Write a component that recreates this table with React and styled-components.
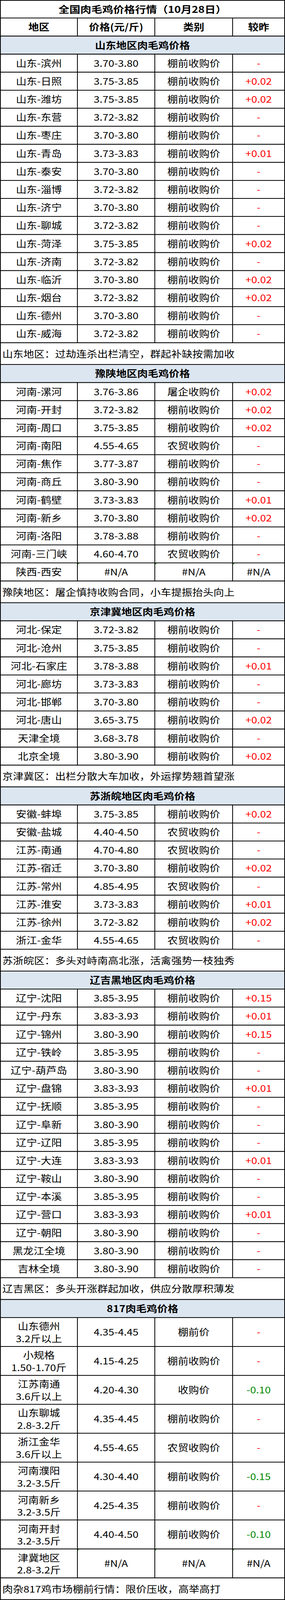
import React from 'react';
import styled, { createGlobalStyle, css } from 'styled-components';

const GlobalStyle = createGlobalStyle`
  html, body {
    margin: 0;
    padding: 0;
    background: #ffffff;
  }
  body {
    font-family: "Noto Sans CJK SC", "Noto Sans", sans-serif;
    color: #000;
  }
`;

const PAGE_H = 4701;

const sections = [
  {
    title: '山东地区肉毛鸡价格',
    rows: [
      ['山东-滨州', '3.70-3.80', '棚前收购价', '-'],
      ['山东-日照', '3.75-3.85', '棚前收购价', '+0.02'],
      ['山东-潍坊', '3.75-3.85', '棚前收购价', '+0.02'],
      ['山东-东营', '3.72-3.82', '棚前收购价', '-'],
      ['山东-枣庄', '3.70-3.80', '棚前收购价', '-'],
      ['山东-青岛', '3.73-3.83', '棚前收购价', '+0.01'],
      ['山东-泰安', '3.70-3.80', '棚前收购价', '-'],
      ['山东-淄博', '3.72-3.82', '棚前收购价', '-'],
      ['山东-济宁', '3.70-3.80', '棚前收购价', '-'],
      ['山东-聊城', '3.72-3.82', '棚前收购价', '-'],
      ['山东-菏泽', '3.75-3.85', '棚前收购价', '+0.02'],
      ['山东-济南', '3.72-3.82', '棚前收购价', '-'],
      ['山东-临沂', '3.70-3.80', '棚前收购价', '+0.02'],
      ['山东-烟台', '3.72-3.82', '棚前收购价', '+0.02'],
      ['山东-德州', '3.70-3.80', '棚前收购价', '-'],
      ['山东-威海', '3.72-3.82', '棚前收购价', '-'],
    ],
    note: '山东地区：过劫连杀出栏清空，群起补缺按需加收',
  },
  {
    title: '豫陕地区肉毛鸡价格',
    rows: [
      ['河南-漯河', '3.76-3.86', '屠企收购价', '+0.02'],
      ['河南-开封', '3.72-3.82', '棚前收购价', '+0.02'],
      ['河南-周口', '3.75-3.85', '棚前收购价', '+0.02'],
      ['河南-南阳', '4.55-4.65', '农贸收购价', '-'],
      ['河南-焦作', '3.77-3.87', '棚前收购价', '-'],
      ['河南-商丘', '3.80-3.90', '棚前收购价', '-'],
      ['河南-鹤壁', '3.73-3.83', '棚前收购价', '+0.01'],
      ['河南-新乡', '3.70-3.80', '棚前收购价', '+0.02'],
      ['河南-洛阳', '3.78-3.88', '棚前收购价', '-'],
      ['河南-三门峡', '4.60-4.70', '农贸收购价', '-'],
      ['陕西-西安', '#N/A', '#N/A', '#N/A'],
    ],
    note: '豫陕地区：屠企慎持收购合同，小车提振抬头向上',
  },
  {
    title: '京津冀地区肉毛鸡价格',
    rows: [
      ['河北-保定', '3.72-3.82', '棚前收购价', '-'],
      ['河北-沧州', '3.75-3.85', '棚前收购价', '-'],
      ['河北-石家庄', '3.78-3.88', '棚前收购价', '+0.01'],
      ['河北-廊坊', '3.73-3.83', '棚前收购价', '-'],
      ['河北-邯郸', '3.70-3.80', '棚前收购价', '-'],
      ['河北-唐山', '3.65-3.75', '棚前收购价', '+0.02'],
      ['天津全境', '3.68-3.78', '棚前收购价', '-'],
      ['北京全境', '3.80-3.90', '棚前收购价', '+0.02'],
    ],
    note: '京津冀区：出栏分散大车加收，外运撑势翘首望涨',
  },
  {
    title: '苏浙皖地区肉毛鸡价格',
    rows: [
      ['安徽-蚌埠', '3.75-3.85', '棚前收购价', '+0.02'],
      ['安徽-盐城', '4.40-4.50', '农贸收购价', '-'],
      ['江苏-南通', '4.70-4.80', '农贸收购价', '-'],
      ['江苏-宿迁', '3.70-3.80', '棚前收购价', '+0.02'],
      ['江苏-常州', '4.85-4.95', '农贸收购价', '-'],
      ['江苏-淮安', '3.73-3.83', '棚前收购价', '+0.01'],
      ['江苏-徐州', '3.72-3.82', '棚前收购价', '+0.02'],
      ['浙江-金华', '4.55-4.65', '农贸收购价', '-'],
    ],
    note: '苏浙皖区：多头对峙南高北涨，活禽强势一枝独秀',
  },
  {
    title: '辽吉黑地区肉毛鸡价格',
    rows: [
      ['辽宁-沈阳', '3.85-3.95', '棚前收购价', '+0.15'],
      ['辽宁-丹东', '3.83-3.93', '棚前收购价', '+0.01'],
      ['辽宁-锦州', '3.80-3.90', '棚前收购价', '+0.15'],
      ['辽宁-铁岭', '3.85-3.95', '棚前收购价', '-'],
      ['辽宁-葫芦岛', '3.80-3.90', '棚前收购价', '-'],
      ['辽宁-盘锦', '3.83-3.93', '棚前收购价', '+0.01'],
      ['辽宁-抚顺', '3.85-3.95', '棚前收购价', '-'],
      ['辽宁-阜新', '3.80-3.90', '棚前收购价', '-'],
      ['辽宁-辽阳', '3.85-3.95', '棚前收购价', '-'],
      ['辽宁-大连', '3.83-3.93', '棚前收购价', '+0.01'],
      ['辽宁-鞍山', '3.80-3.90', '棚前收购价', '-'],
      ['辽宁-本溪', '3.85-3.95', '棚前收购价', '-'],
      ['辽宁-营口', '3.83-3.93', '棚前收购价', '+0.01'],
      ['辽宁-朝阳', '3.80-3.90', '棚前收购价', '-'],
      ['黑龙江全境', '3.80-3.90', '棚前收购价', '-'],
      ['吉林全境', '3.80-3.90', '棚前收购价', '-'],
    ],
    note: '辽吉黑区：多头开涨群起加收，供应分散厚积薄发',
  },
  {
    title: '817肉毛鸡价格',
    tall: true,
    rows: [
      [['山东德州', '3.2斤以上'], '4.35-4.45', '棚前价', '-'],
      [['小规格', '1.50-1.70斤'], '4.15-4.25', '棚前收购价', '-'],
      [['江苏南通', '3.6斤以上'], '4.20-4.30', '收购价', '-0.10'],
      [['山东聊城', '2.8-3.2斤'], '4.35-4.45', '棚前收购价', '-'],
      [['浙江金华', '3.6斤以上'], '4.55-4.65', '农贸收购价', '-'],
      [['河南濮阳', '3.2-3.5斤'], '4.30-4.40', '棚前收购价', '-0.15'],
      [['河南新乡', '3.2-3.5斤'], '4.25-4.35', '棚前收购价', '-'],
      [['河南开封', '3.2-3.5斤'], '4.40-4.50', '棚前收购价', '-0.10'],
      [['津冀地区', '2.8-3.2斤'], '#N/A', '#N/A', '#N/A'],
    ],
    note: '肉杂817鸡市场棚前行情：限价压收，高举高打',
  },
];

function toneOf(v) {
  if (v === '#N/A') return 'plain';
  if (v.startsWith('-0')) return 'down';
  return 'up';
}

// the sheet is 4701px tall; squeeze it when the window is shorter
function useFit() {
  const h = typeof window !== 'undefined' ? window.innerHeight : PAGE_H;
  return Math.min(1, h / PAGE_H);
}

function App() {
  const fit = useFit();
  return (
    <>
      <GlobalStyle />
      <Frame style={{ height: PAGE_H * fit }}>
        <Sheet style={{ transform: `scaleY(${fit})` }}>
          <WideRow $h={50}>
            <TitleCell>全国肉毛鸡价格行情（10月28日）</TitleCell>
          </WideRow>
          <Row $h={51}>
            <HeadCell>地区</HeadCell>
            <HeadCell>价格(元/斤)</HeadCell>
            <HeadCell>类别</HeadCell>
            <HeadCell>较昨</HeadCell>
          </Row>
          {sections.map((s) => (
            <React.Fragment key={s.title}>
              <WideRow $h={51}>
                <SectionCell>{s.title}</SectionCell>
              </WideRow>
              {s.rows.map(([region, price, kind, change], i) => (
                <Row key={i} $h={s.tall ? 83 : 51}>
                  <Cell>
                    {Array.isArray(region) ? (
                      <Stack>
                        <span>{region[0]}</span>
                        <span>{region[1]}</span>
                      </Stack>
                    ) : (
                      region
                    )}
                  </Cell>
                  <Cell $flag={price === '#N/A'}>{price}</Cell>
                  <Cell $flag={kind === '#N/A'}>{kind}</Cell>
                  <Cell $flag={change === '#N/A'} $tone={toneOf(change)}>
                    {change}
                  </Cell>
                </Row>
              ))}
              <WideRow $h={62}>
                <NoteCell>{s.note}</NoteCell>
              </WideRow>
            </React.Fragment>
          ))}
        </Sheet>
      </Frame>
    </>
  );
}

export default App;

const Frame = styled.div`
  width: 729px;
  overflow: hidden;
`;

const Sheet = styled.div`
  display: flex;
  flex-direction: column;
  gap: 2px;
  padding: 2px;
  width: 729px;
  box-sizing: border-box;
  background: #000;
  font-size: 27px;
  line-height: 1.2;
  transform-origin: 0 0;
`;

const Row = styled.div`
  display: grid;
  grid-template-columns: 195px 196px 197px 131px;
  gap: 2px;
  flex: none;
  height: ${(p) => p.$h}px;
  overflow: hidden;
`;

const WideRow = styled.div`
  display: flex;
  flex: none;
  height: ${(p) => p.$h}px;
  overflow: hidden;
`;

const base = css`
  background: #fff;
  display: flex;
  align-items: center;
  justify-content: center;
  text-align: center;
  white-space: nowrap;
  min-width: 0;
  min-height: 0;
`;

const TitleCell = styled.div`
  ${base};
  flex: 1;
  font-weight: 700;
  font-size: 28px;
`;

const HeadCell = styled.div`
  ${base};
  font-weight: 700;
`;

const SectionCell = styled.div`
  ${base};
  flex: 1;
  background: #dce6f1;
  font-weight: 700;
`;

const Cell = styled.div`
  ${base};
  position: relative;
  color: ${(p) =>
    p.$tone === 'up' ? '#ff0000' : p.$tone === 'down' ? '#008a00' : '#000'};

  ${(p) =>
    p.$flag &&
    css`
      &::before {
        content: '';
        position: absolute;
        top: 0;
        left: 0;
        border-top: 4px solid #1e8c2e;
        border-right: 4px solid transparent;
      }
    `}
`;

const Stack = styled.div`
  display: flex;
  flex-direction: column;
  align-items: center;
  line-height: 36px;
`;

const NoteCell = styled.div`
  ${base};
  flex: 1;
  justify-content: flex-start;
  padding-left: 4px;
`;
